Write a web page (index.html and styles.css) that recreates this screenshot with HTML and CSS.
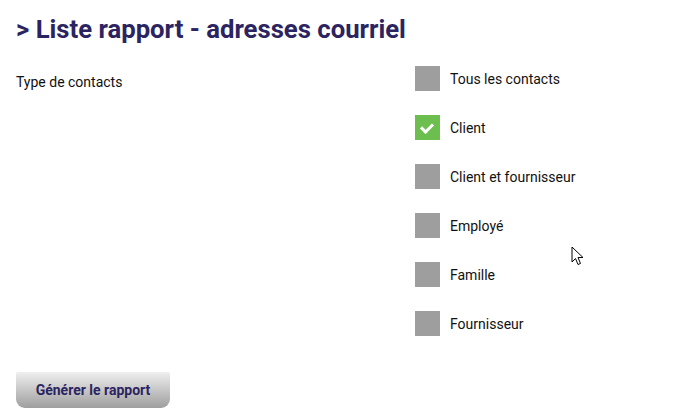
FILE: index.html
```html
<!DOCTYPE html>
<html lang="fr">
<head>
    <meta charset="UTF-8">
    <title>Liste rapport - adresses courriel</title>
    <link rel="stylesheet" href="styles.css">
</head>
<body>

<div class="page">
    <h1 class="title">&gt; Liste rapport - adresses courriel</h1>

    <form class="report-form" id="reportForm">
        <div class="field">
            <div class="field-label">Type de contacts</div>
            <div class="options">
                <label class="option"><input type="checkbox" name="type" value="tous"><span class="box"></span>Tous les contacts</label>
                <label class="option"><input type="checkbox" name="type" value="client" checked><span class="box"></span>Client</label>
                <label class="option"><input type="checkbox" name="type" value="client-fournisseur"><span class="box"></span>Client et fournisseur</label>
                <label class="option"><input type="checkbox" name="type" value="employe"><span class="box"></span>Employé</label>
                <label class="option"><input type="checkbox" name="type" value="famille"><span class="box"></span>Famille</label>
                <label class="option"><input type="checkbox" name="type" value="fournisseur"><span class="box"></span>Fournisseur</label>
            </div>
        </div>

        <button type="submit" class="generate">Générer le rapport</button>
    </form>
</div>

<!-- mouse pointer seen in the capture -->
<svg class="pointer" width="14" height="22" viewBox="0 0 14 22">
    <path d="M1 1 L1 16 L4.5 12.5 L7 18.5 L9.5 17.5 L7 11.5 L12 11.5 Z" fill="#fff" stroke="#000" stroke-width="1" stroke-linejoin="round"/>
</svg>

</body>
</html>
```

FILE: styles.css
```css
body {
    font-family: Roboto, "Liberation Sans", sans-serif;
    margin: 0;
    color: #111;
    background: #fff;
}
.page {
    padding: 12px 16px 0 16px;
}
.title {
    margin: 0;
    font-size: 25.7px;
    font-weight: 700;
    color: #2b2461;
    line-height: 34px;
}
.report-form {
    margin-top: 20px;
}
.field {
    display: flex;
}
.field-label {
    width: 399px;
    font-size: 14px;
    padding-top: 8px;
}
.options {
    display: flex;
    flex-direction: column;
    gap: 24px;
}
.option {
    display: flex;
    align-items: center;
    gap: 10px;
    font-size: 14px;
    height: 25px;
    cursor: pointer;
}
.option input {
    display: none;
}
.box {
    width: 25px;
    height: 25px;
    background: #9e9e9e;
    position: relative;
}
.option input:checked + .box {
    background: #6cbf4e;
}
.option input:checked + .box::after {
    content: "";
    position: absolute;
    left: 8px;
    top: 6px;
    width: 5px;
    height: 9px;
    border: solid #fff;
    border-width: 0 3px 3px 0;
    transform: rotate(45deg);
}
.generate {
    margin-top: 36px;
    width: 154px;
    height: 36px;
    border: none;
    border-radius: 2px 2px 9px 9px;
    background: linear-gradient(#efefef, #9e9e9e);
    font-family: Roboto, "Liberation Sans", sans-serif;
    font-size: 14px;
    font-weight: 700;
    color: #2b2461;
    cursor: pointer;
}
.pointer {
    position: absolute;
    left: 571px;
    top: 246px;
}
```
